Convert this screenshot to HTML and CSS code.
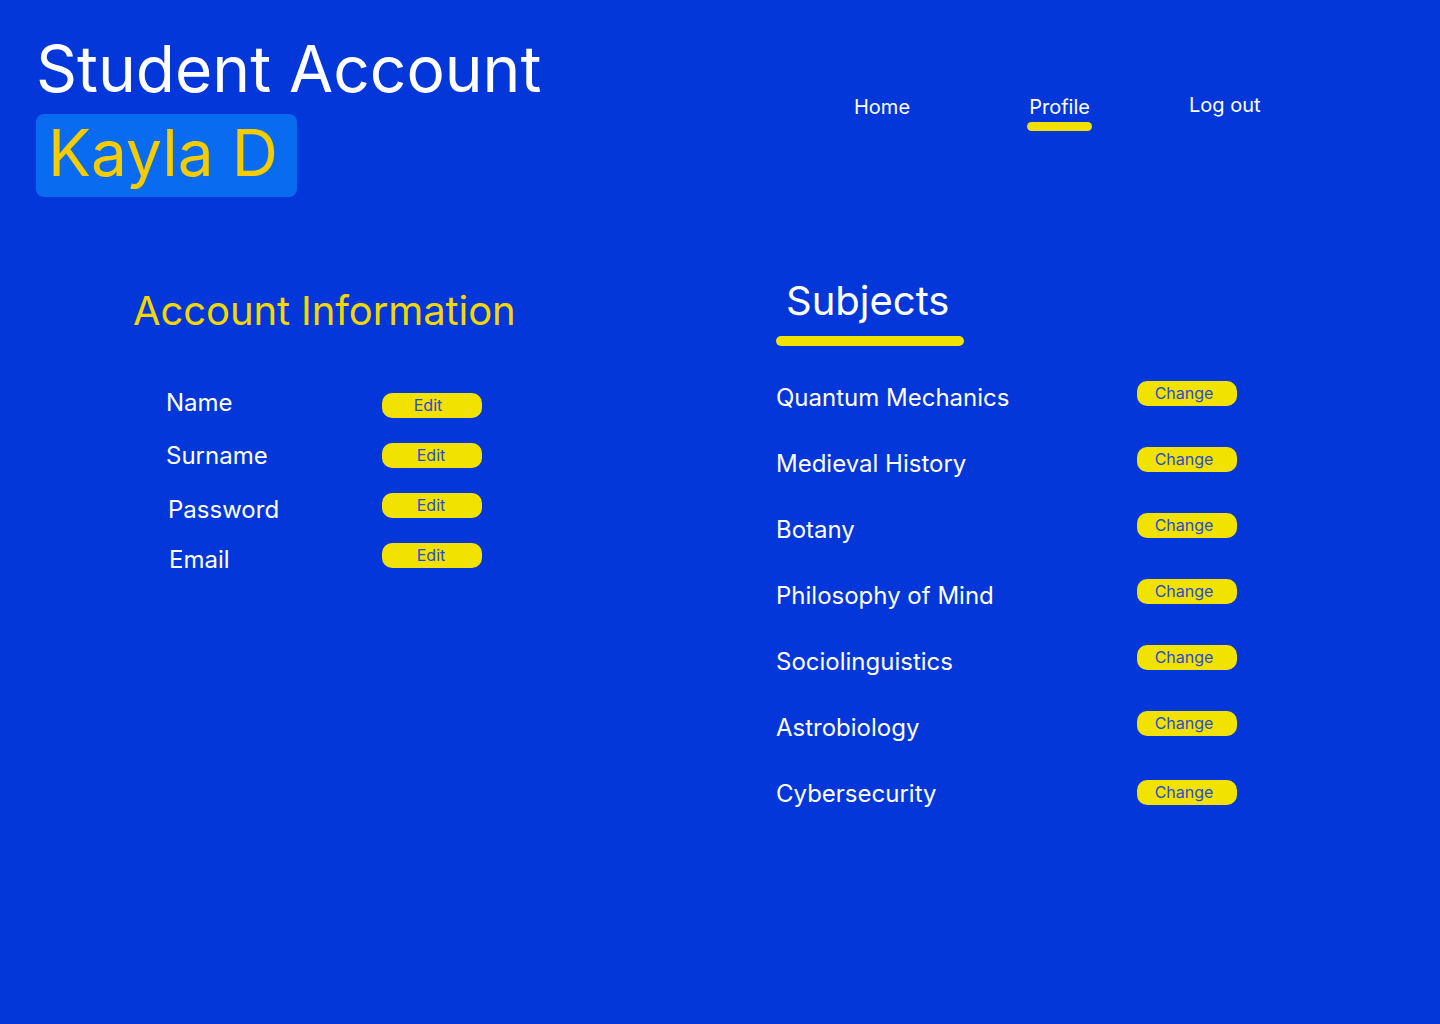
FILE: index.html
```html
<!DOCTYPE html>
<html lang="en">
<head>
<meta charset="utf-8">
<title>Student Account</title>
<link rel="stylesheet" href="styles.css">
</head>
<body>
<header class="header">
  <div class="brand">
    <h1 class="title">Student Account</h1>
    <div class="user-badge">Kayla D</div>
  </div>
  <nav class="nav">
    <a class="nav-item nav-home">Home</a>
    <a class="nav-item nav-profile is-active">Profile<span class="nav-underline"></span></a>
    <a class="nav-item nav-logout">Log out</a>
  </nav>
</header>
<main class="main">
  <section class="account">
    <h2 class="account-title">Account Information</h2>
    <div class="fields">
      <div class="field field-name"><span class="field-label">Name</span><button class="pill pill-edit">Edit</button></div>
      <div class="field field-surname"><span class="field-label">Surname</span><button class="pill pill-edit">Edit</button></div>
      <div class="field field-password"><span class="field-label">Password</span><button class="pill pill-edit">Edit</button></div>
      <div class="field field-email"><span class="field-label">Email</span><button class="pill pill-edit">Edit</button></div>
    </div>
  </section>
  <section class="subjects">
    <h2 class="subjects-title">Subjects</h2>
    <div class="subjects-underline"></div>
    <ul class="subject-list">
      <li class="subject"><span class="subject-name">Quantum Mechanics</span><button class="pill pill-change">Change</button></li>
      <li class="subject"><span class="subject-name">Medieval History</span><button class="pill pill-change">Change</button></li>
      <li class="subject"><span class="subject-name">Botany</span><button class="pill pill-change">Change</button></li>
      <li class="subject"><span class="subject-name">Philosophy of Mind</span><button class="pill pill-change">Change</button></li>
      <li class="subject"><span class="subject-name">Sociolinguistics</span><button class="pill pill-change">Change</button></li>
      <li class="subject"><span class="subject-name">Astrobiology</span><button class="pill pill-change">Change</button></li>
      <li class="subject subject-last"><span class="subject-name">Cybersecurity</span><button class="pill pill-change">Change</button></li>
    </ul>
  </section>
</main>
</body>
</html>
```

FILE: styles.css
```css
* { box-sizing: border-box; }
html, body {
  margin: 0;
  padding: 0;
}
body {
  width: 1440px;
  min-height: 1024px;
  background: #0437d9;
  font-family: Inter, "Noto Sans", "Liberation Sans", sans-serif;
  color: #ffffff;
}

.header {
  display: flex;
  align-items: flex-start;
  padding: 30px 0 0 34px;
}
.brand {
  display: flex;
  flex-direction: column;
  align-items: flex-start;
  width: 820px;
}
.title {
  margin: 0 0 0 2px;
  font-size: 64px;
  font-weight: 400;
  line-height: 78px;
  color: #ffffff;
  letter-spacing: 0;
}
.user-badge {
  margin: 6px 0 0 2px;
  height: 83px;
  padding: 0 19px 0 12px;
  background: #086bf0;
  border-radius: 8px;
  color: #f5cc00;
  font-size: 64px;
  line-height: 78px;
}

.nav {
  display: flex;
  align-items: flex-start;
  margin-top: 65px;
}
.nav-item {
  display: flex;
  flex-direction: column;
  align-items: center;
  font-size: 20px;
  line-height: 24px;
  color: #ffffff;
  cursor: pointer;
}
.nav-home { margin-left: 0; }
.nav-profile { margin-left: 117px; width: 65px; }
.nav-logout { margin-left: 97px; margin-top: -2px; }
.nav-underline {
  display: block;
  width: 65px;
  height: 9px;
  margin-top: 3px;
  background: #f2e100;
  border-radius: 5px;
}

.main {
  display: grid;
  grid-template-columns: 643px 1fr;
  padding: 80px 0 0 133px;
}

.account-title {
  margin: 10px 0 0 0;
  font-size: 40px;
  font-weight: 400;
  line-height: 48px;
  color: #f2d800;
  letter-spacing: -0.1px;
}
.fields {
  margin-top: 58px;
  padding-left: 33px;
}
.field {
  display: flex;
  align-items: flex-start;
  height: 50px;
}
.field-label {
  width: 216px;
  font-size: 24px;
  line-height: 29px;
  color: #ffffff;
}
.field-name .field-label { margin-top: -5px; }
.field-surname .field-label { margin-top: -2px; }
.field-password .field-label { margin-top: 2px; padding-left: 2px; }
.field-email .field-label { margin-top: 2px; padding-left: 3px; }

.pill {
  width: 100px;
  height: 25px;
  padding: 0;
  border: 0;
  border-radius: 10px;
  background: #f2e200;
  color: #2a4cd2;
  font-family: Inter, "Noto Sans", "Liberation Sans", sans-serif;
  font-size: 16px;
  line-height: 25px;
  text-align: center;
  cursor: pointer;
}
.pill-edit { padding-right: 2px; }
.field-name .pill-edit { padding-right: 8px; }
.pill-change { padding-right: 6px; }

.subjects-title {
  margin: 0;
  padding-left: 10px;
  font-size: 40px;
  font-weight: 400;
  line-height: 48px;
  color: #ffffff;
}
.subjects-underline {
  width: 188px;
  height: 10px;
  margin-top: 11px;
  background: #f2e200;
  border-radius: 5px;
}
.subject-list {
  list-style: none;
  margin: 35px 0 0 0;
  padding: 0;
}
.subject {
  display: flex;
  align-items: flex-start;
  height: 66px;
}
.subject-name {
  width: 361px;
  margin-top: 2px;
  font-size: 24px;
  line-height: 29px;
  color: #ffffff;
}
.subject-last .pill { margin-top: 3px; }
```
